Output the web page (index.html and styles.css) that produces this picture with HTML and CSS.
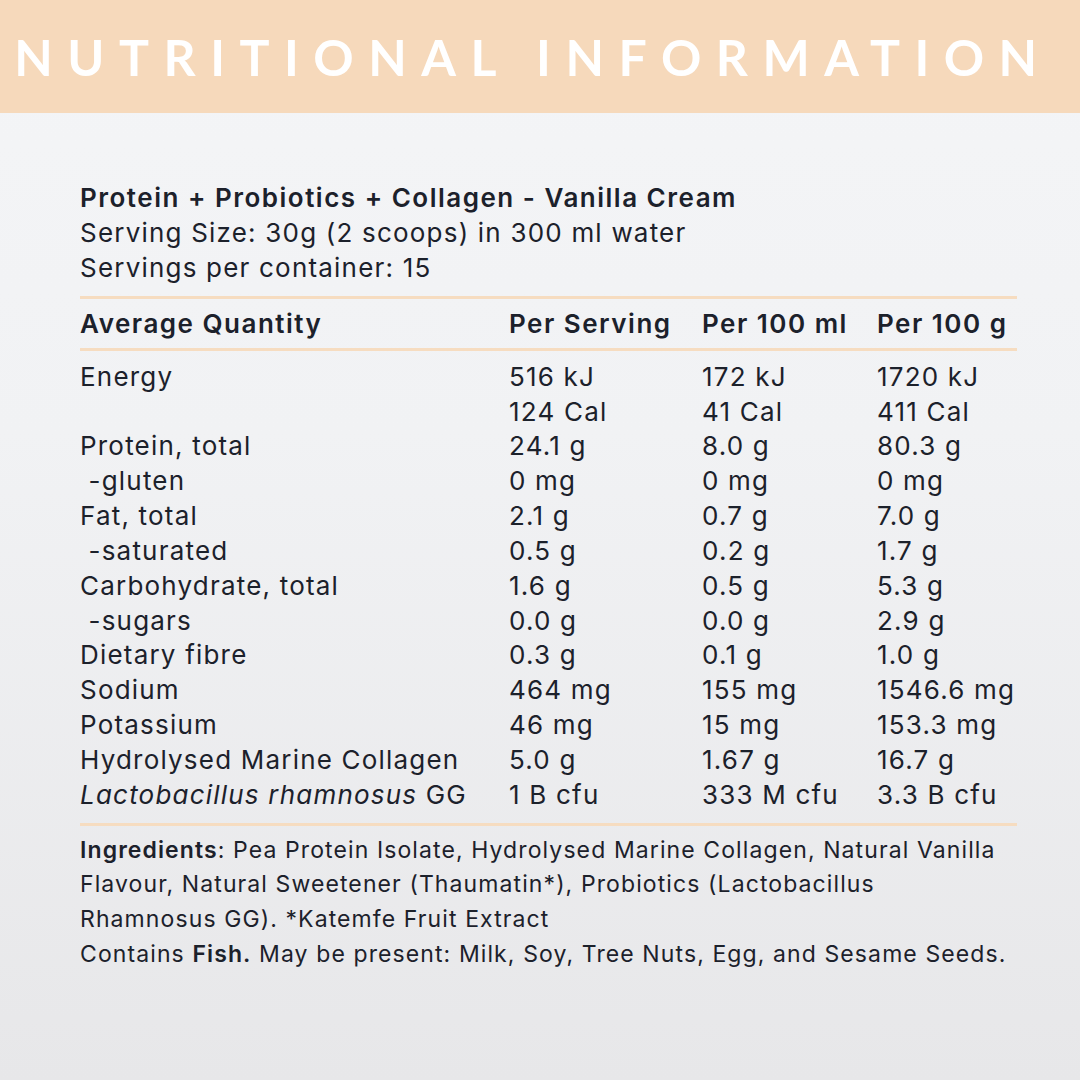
FILE: index.html
```html
<!DOCTYPE html>
<html>
<head>
<meta charset="utf-8">
<link rel="stylesheet" href="styles.css">
</head>
<body>
<header class="banner"><h1>NUTRITIONAL INFORMATION</h1></header>
<main class="panel">
  <div class="intro">
    <p class="product">Protein + Probiotics + Collagen - Vanilla Cream</p>
    <p>Serving Size: 30g (2 scoops) in 300 ml water</p>
    <p>Servings per container: 15</p>
  </div>
  <div class="table">
    <div class="row head">
      <span>Average Quantity</span><span>Per Serving</span><span>Per 100 ml</span><span>Per 100 g</span>
    </div>
    <div class="body">
      <div class="row"><span>Energy</span><span>516 kJ</span><span>172 kJ</span><span>1720 kJ</span></div>
      <div class="row"><span></span><span>124 Cal</span><span>41 Cal</span><span>411 Cal</span></div>
      <div class="row"><span>Protein, total</span><span>24.1 g</span><span>8.0 g</span><span>80.3 g</span></div>
      <div class="row"><span>&nbsp;-gluten</span><span>0 mg</span><span>0 mg</span><span>0 mg</span></div>
      <div class="row"><span>Fat, total</span><span>2.1 g</span><span>0.7 g</span><span>7.0 g</span></div>
      <div class="row"><span>&nbsp;-saturated</span><span>0.5 g</span><span>0.2 g</span><span>1.7 g</span></div>
      <div class="row"><span>Carbohydrate, total</span><span>1.6 g</span><span>0.5 g</span><span>5.3 g</span></div>
      <div class="row"><span>&nbsp;-sugars</span><span>0.0 g</span><span>0.0 g</span><span>2.9 g</span></div>
      <div class="row"><span>Dietary fibre</span><span>0.3 g</span><span>0.1 g</span><span>1.0 g</span></div>
      <div class="row"><span>Sodium</span><span>464 mg</span><span>155 mg</span><span>1546.6 mg</span></div>
      <div class="row"><span>Potassium</span><span>46 mg</span><span>15 mg</span><span>153.3 mg</span></div>
      <div class="row"><span>Hydrolysed Marine Collagen</span><span>5.0 g</span><span>1.67 g</span><span>16.7 g</span></div>
      <div class="row"><span><em>Lactobacillus rhamnosus</em> GG</span><span>1 B cfu</span><span>333 M cfu</span><span>3.3 B cfu</span></div>
    </div>
  </div>
  <div class="ingredients">
    <p><b>Ingredients</b>: Pea Protein Isolate, Hydrolysed Marine Collagen, Natural Vanilla<br>Flavour, Natural Sweetener (Thaumatin*), Probiotics (Lactobacillus<br>Rhamnosus GG). *Katemfe Fruit Extract</p>
    <p>Contains <b>Fish.</b> May be present: Milk, Soy, Tree Nuts, Egg, and Sesame Seeds.</p>
  </div>
</main>
</body>
</html>
```

FILE: styles.css
```css
* { box-sizing: border-box; }
html, body { margin: 0; padding: 0; }
body {
  width: 1080px;
  height: 1080px;
  overflow: hidden;
  font-family: "Inter", "Open Sans", sans-serif;
  color: #1c212b;
  background: linear-gradient(#f4f5f7 0%, #f1f2f4 40%, #e7e7e9 100%);
  display: flex;
  flex-direction: column;
}
.banner {
  height: 113px;
  background: #f6d9bb;
  display: flex;
  align-items: center;
  justify-content: center;
}
.banner h1 {
  margin: 0;
  color: #ffffff;
  font-family: "Lato", sans-serif;
  font-weight: 700;
  font-size: 50px;
  letter-spacing: 14.5px;
  padding-right: 14px;
}
.panel {
  padding: 67px 63px 0 80px;
  font-size: 26px;
  letter-spacing: 1.2px;
}
.intro p { margin: 0; line-height: 35px; }
.intro .product { font-weight: 600; letter-spacing: 1.5px; }
.table {
  margin-top: 11px;
  border-top: 3px solid #f6dcc0;
  border-bottom: 3px solid #f6dcc0;
}
.row {
  display: grid;
  grid-template-columns: 429px 193px 175px 1fr;
  line-height: 34.83px;
  white-space: pre;
}
.row.head {
  font-weight: 600;
  letter-spacing: 1.5px;
  padding: 8px 0 6px;
  border-bottom: 3px solid #f6dcc0;
}
.body { padding: 9px 0 10px; }
.ingredients {
  padding-top: 7px;
  font-size: 23px;
  line-height: 34.7px;
  letter-spacing: 1.1px;
}
.ingredients p { margin: 0; white-space: nowrap; }
.ingredients b { font-weight: 600; }
```
